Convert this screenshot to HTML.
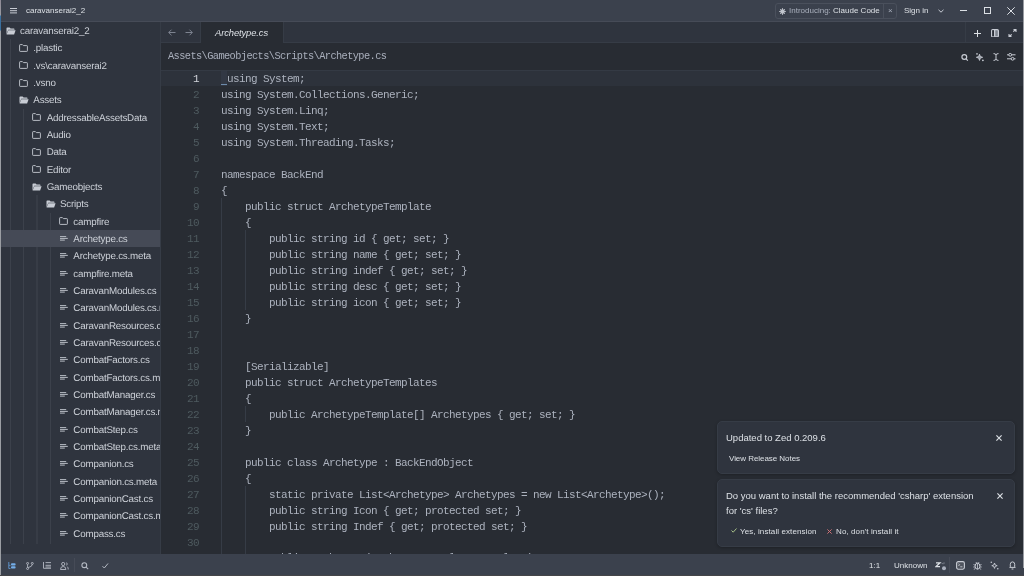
<!DOCTYPE html>
<html><head><meta charset="utf-8">
<style>
*{margin:0;padding:0;box-sizing:border-box}
html,body{width:1024px;height:576px;overflow:hidden;background:#282c33}
body{position:relative;font-family:"Liberation Sans",sans-serif;color:#dce0e5}
.a{position:absolute}
#title{left:0;top:0;width:1024px;height:22px;background:#3b414d;border-bottom:1px solid #464b57}
#panel{left:0;top:22px;width:161px;height:532px;background:#2f343e;border-right:1px solid #363c46;overflow:hidden}
.row{position:absolute;left:0;width:160px;height:17.333px;font-size:9.8px;line-height:17.333px;white-space:nowrap;color:#cdd1d8;letter-spacing:-0.2px;text-rendering:geometricPrecision}
.row.sel{background:#454a56}
.row svg{position:absolute;top:4px}
.row span{position:absolute;top:1px}
.ig{position:absolute;width:1px;background:#3c414b}
#tabbar{left:161px;top:22px;width:863px;height:21px;background:#2f343e;border-bottom:1px solid #363c46}
#editor{left:161px;top:43px;width:863px;height:511px;background:#282c33;overflow:hidden}
.ln{position:absolute;left:0;width:38px;text-align:right;font-family:"Liberation Mono",monospace;font-size:11px;letter-spacing:-0.6px;padding-top:1px;color:#4e5a5f;height:16px;line-height:16px}
.cl{position:absolute;left:60px;font-family:"Liberation Mono",monospace;font-size:11px;letter-spacing:-0.6px;color:#acb2be;white-space:pre;height:16px;line-height:16px;padding-top:1px}
.eig{position:absolute;width:1px;background:#363c46}
#status{left:0;top:554px;width:1024px;height:22px;background:#3b414d}
.card{position:absolute;left:717px;width:298px;background:#2f343e;border:1px solid #363c46;border-radius:5px;box-shadow:0 1px 3px rgba(0,0,0,0.25)}
svg{display:block}
</style></head><body>
<div id="root" style="position:absolute;left:0;top:0;width:1024px;height:576px;overflow:hidden;background:#282c33;will-change:transform">

<!-- title bar -->
<div id="title" class="a">
  <svg class="a" style="left:10px;top:8px" width="8" height="6" viewBox="0 0 8 6"><path d="M0 0.5H7M0 2.7H7M0 4.9H7" stroke="#c8ccd4" stroke-width="1"/></svg>
  <div class="a" style="left:26px;top:0;height:21px;line-height:21px;font-size:8px;color:#dce0e5">caravanserai2_2</div>
  <div class="a" style="left:775px;top:3px;width:122px;height:16px;border:1px solid #4a505c;border-radius:3px"></div>
  <div class="a" style="left:883px;top:3px;width:1px;height:16px;background:#4a505c"></div>
  <svg class="a" style="left:779px;top:8px" width="7" height="7" viewBox="0 0 7 7"><circle cx="3.5" cy="3.5" r="2.3" fill="#c0c4cc"/><path d="M3.5 0V7M0 3.5H7M1 1L6 6M6 1L1 6" stroke="#c0c4cc" stroke-width="0.8"/></svg>
  <div class="a" style="left:789px;top:3px;height:16px;line-height:16px;font-size:8px;color:#a9afbc">Introducing: <span style="color:#dce0e5">Claude Code</span></div>
  <div class="a" style="left:888px;top:3px;height:16px;line-height:16px;font-size:8px;color:#a9afbc">×</div>
  <div class="a" style="left:904px;top:0;height:21px;line-height:21px;font-size:8px;color:#dce0e5">Sign in</div>
  <svg class="a" style="left:938px;top:9px" width="6" height="4" viewBox="0 0 6 4"><path d="M0.5 0.8L3 3.2L5.5 0.8" stroke="#c8ccd4" fill="none" stroke-width="1"/></svg>
  <div class="a" style="left:960px;top:10px;width:7px;height:1px;background:#dce0e5"></div>
  <div class="a" style="left:984px;top:7px;width:7px;height:7px;border:1px solid #dce0e5"></div>
  <svg class="a" style="left:1007px;top:7px" width="8" height="8" viewBox="0 0 8 8"><path d="M0.3 0.3L7.7 7.7M7.7 0.3L0.3 7.7" stroke="#dce0e5" stroke-width="1"/></svg>
</div>

<!-- project panel -->
<div id="panel" class="a">
<div class="ig" style="left:10px;width:1px;background:#3c414b;top:17.33px;height:504.66px"></div>
<div class="ig" style="left:23px;width:1px;background:#3c414b;top:86.66px;height:435.33px"></div>
<div class="ig" style="left:36px;width:2px;background:#373c46;top:173.33px;height:348.66px"></div>
<div class="ig" style="left:50px;width:1px;background:#3c414b;top:190.66px;height:331.33px"></div>
<div class="row" style="top:0.000px"><svg class="a" style="left:5.5px;top:4.7px" width="10" height="8" viewBox="0 0 10 8"><path d="M0.5 1.2Q0.5 0.5 1.2 0.5H3.6L4.6 1.5H7.8Q8.5 1.5 8.5 2.2V2.8H2.2L0.5 7.5Z" fill="#c8ccd4"/><path d="M2.3 3.3H9.6L8.1 7.5H0.6Z" fill="#c8ccd4"/></svg><span style="left:20.00px">caravanserai2_2</span></div>
<div class="row" style="top:17.333px"><svg class="a" style="left:18.83px;top:4.7px" width="9" height="8" viewBox="0 0 9 8"><path d="M0.6 1.2Q0.6 0.6 1.2 0.6H3.4L4.4 1.6H7.8Q8.4 1.6 8.4 2.2V6.8Q8.4 7.4 7.8 7.4H1.2Q0.6 7.4 0.6 6.8Z" fill="none" stroke="#b8bcc4" stroke-width="1"/></svg><span style="left:33.33px">.plastic</span></div>
<div class="row" style="top:34.666px"><svg class="a" style="left:18.83px;top:4.7px" width="9" height="8" viewBox="0 0 9 8"><path d="M0.6 1.2Q0.6 0.6 1.2 0.6H3.4L4.4 1.6H7.8Q8.4 1.6 8.4 2.2V6.8Q8.4 7.4 7.8 7.4H1.2Q0.6 7.4 0.6 6.8Z" fill="none" stroke="#b8bcc4" stroke-width="1"/></svg><span style="left:33.33px">.vs\caravanserai2</span></div>
<div class="row" style="top:51.999px"><svg class="a" style="left:18.83px;top:4.7px" width="9" height="8" viewBox="0 0 9 8"><path d="M0.6 1.2Q0.6 0.6 1.2 0.6H3.4L4.4 1.6H7.8Q8.4 1.6 8.4 2.2V6.8Q8.4 7.4 7.8 7.4H1.2Q0.6 7.4 0.6 6.8Z" fill="none" stroke="#b8bcc4" stroke-width="1"/></svg><span style="left:33.33px">.vsno</span></div>
<div class="row" style="top:69.332px"><svg class="a" style="left:18.83px;top:4.7px" width="10" height="8" viewBox="0 0 10 8"><path d="M0.5 1.2Q0.5 0.5 1.2 0.5H3.6L4.6 1.5H7.8Q8.5 1.5 8.5 2.2V2.8H2.2L0.5 7.5Z" fill="#c8ccd4"/><path d="M2.3 3.3H9.6L8.1 7.5H0.6Z" fill="#c8ccd4"/></svg><span style="left:33.33px">Assets</span></div>
<div class="row" style="top:86.665px"><svg class="a" style="left:32.17px;top:4.7px" width="9" height="8" viewBox="0 0 9 8"><path d="M0.6 1.2Q0.6 0.6 1.2 0.6H3.4L4.4 1.6H7.8Q8.4 1.6 8.4 2.2V6.8Q8.4 7.4 7.8 7.4H1.2Q0.6 7.4 0.6 6.8Z" fill="none" stroke="#b8bcc4" stroke-width="1"/></svg><span style="left:46.67px">AddressableAssetsData</span></div>
<div class="row" style="top:103.998px"><svg class="a" style="left:32.17px;top:4.7px" width="9" height="8" viewBox="0 0 9 8"><path d="M0.6 1.2Q0.6 0.6 1.2 0.6H3.4L4.4 1.6H7.8Q8.4 1.6 8.4 2.2V6.8Q8.4 7.4 7.8 7.4H1.2Q0.6 7.4 0.6 6.8Z" fill="none" stroke="#b8bcc4" stroke-width="1"/></svg><span style="left:46.67px">Audio</span></div>
<div class="row" style="top:121.331px"><svg class="a" style="left:32.17px;top:4.7px" width="9" height="8" viewBox="0 0 9 8"><path d="M0.6 1.2Q0.6 0.6 1.2 0.6H3.4L4.4 1.6H7.8Q8.4 1.6 8.4 2.2V6.8Q8.4 7.4 7.8 7.4H1.2Q0.6 7.4 0.6 6.8Z" fill="none" stroke="#b8bcc4" stroke-width="1"/></svg><span style="left:46.67px">Data</span></div>
<div class="row" style="top:138.664px"><svg class="a" style="left:32.17px;top:4.7px" width="9" height="8" viewBox="0 0 9 8"><path d="M0.6 1.2Q0.6 0.6 1.2 0.6H3.4L4.4 1.6H7.8Q8.4 1.6 8.4 2.2V6.8Q8.4 7.4 7.8 7.4H1.2Q0.6 7.4 0.6 6.8Z" fill="none" stroke="#b8bcc4" stroke-width="1"/></svg><span style="left:46.67px">Editor</span></div>
<div class="row" style="top:155.997px"><svg class="a" style="left:32.17px;top:4.7px" width="10" height="8" viewBox="0 0 10 8"><path d="M0.5 1.2Q0.5 0.5 1.2 0.5H3.6L4.6 1.5H7.8Q8.5 1.5 8.5 2.2V2.8H2.2L0.5 7.5Z" fill="#c8ccd4"/><path d="M2.3 3.3H9.6L8.1 7.5H0.6Z" fill="#c8ccd4"/></svg><span style="left:46.67px">Gameobjects</span></div>
<div class="row" style="top:173.330px"><svg class="a" style="left:45.5px;top:4.7px" width="10" height="8" viewBox="0 0 10 8"><path d="M0.5 1.2Q0.5 0.5 1.2 0.5H3.6L4.6 1.5H7.8Q8.5 1.5 8.5 2.2V2.8H2.2L0.5 7.5Z" fill="#c8ccd4"/><path d="M2.3 3.3H9.6L8.1 7.5H0.6Z" fill="#c8ccd4"/></svg><span style="left:60.00px">Scripts</span></div>
<div class="row" style="top:190.663px"><svg class="a" style="left:58.83px;top:4.7px" width="9" height="8" viewBox="0 0 9 8"><path d="M0.6 1.2Q0.6 0.6 1.2 0.6H3.4L4.4 1.6H7.8Q8.4 1.6 8.4 2.2V6.8Q8.4 7.4 7.8 7.4H1.2Q0.6 7.4 0.6 6.8Z" fill="none" stroke="#b8bcc4" stroke-width="1"/></svg><span style="left:73.33px">campfire</span></div>
<div class="row sel" style="top:207.996px"><svg class="a" style="left:60.33px;top:5px" width="9" height="7" viewBox="0 0 9 7"><path d="M0 1.6H6.2M0 3.4H7.8M0 5.1H4.8" stroke="#b8bcc4" stroke-width="1"/></svg><span style="left:73.33px">Archetype.cs</span></div>
<div class="row" style="top:225.329px"><svg class="a" style="left:60.33px;top:5px" width="9" height="7" viewBox="0 0 9 7"><path d="M0 1.6H6.2M0 3.4H7.8M0 5.1H4.8" stroke="#b8bcc4" stroke-width="1"/></svg><span style="left:73.33px">Archetype.cs.meta</span></div>
<div class="row" style="top:242.662px"><svg class="a" style="left:60.33px;top:5px" width="9" height="7" viewBox="0 0 9 7"><path d="M0 1.6H6.2M0 3.4H7.8M0 5.1H4.8" stroke="#b8bcc4" stroke-width="1"/></svg><span style="left:73.33px">campfire.meta</span></div>
<div class="row" style="top:259.995px"><svg class="a" style="left:60.33px;top:5px" width="9" height="7" viewBox="0 0 9 7"><path d="M0 1.6H6.2M0 3.4H7.8M0 5.1H4.8" stroke="#b8bcc4" stroke-width="1"/></svg><span style="left:73.33px">CaravanModules.cs</span></div>
<div class="row" style="top:277.328px"><svg class="a" style="left:60.33px;top:5px" width="9" height="7" viewBox="0 0 9 7"><path d="M0 1.6H6.2M0 3.4H7.8M0 5.1H4.8" stroke="#b8bcc4" stroke-width="1"/></svg><span style="left:73.33px">CaravanModules.cs.meta</span></div>
<div class="row" style="top:294.661px"><svg class="a" style="left:60.33px;top:5px" width="9" height="7" viewBox="0 0 9 7"><path d="M0 1.6H6.2M0 3.4H7.8M0 5.1H4.8" stroke="#b8bcc4" stroke-width="1"/></svg><span style="left:73.33px">CaravanResources.cs</span></div>
<div class="row" style="top:311.994px"><svg class="a" style="left:60.33px;top:5px" width="9" height="7" viewBox="0 0 9 7"><path d="M0 1.6H6.2M0 3.4H7.8M0 5.1H4.8" stroke="#b8bcc4" stroke-width="1"/></svg><span style="left:73.33px">CaravanResources.cs.meta</span></div>
<div class="row" style="top:329.327px"><svg class="a" style="left:60.33px;top:5px" width="9" height="7" viewBox="0 0 9 7"><path d="M0 1.6H6.2M0 3.4H7.8M0 5.1H4.8" stroke="#b8bcc4" stroke-width="1"/></svg><span style="left:73.33px">CombatFactors.cs</span></div>
<div class="row" style="top:346.660px"><svg class="a" style="left:60.33px;top:5px" width="9" height="7" viewBox="0 0 9 7"><path d="M0 1.6H6.2M0 3.4H7.8M0 5.1H4.8" stroke="#b8bcc4" stroke-width="1"/></svg><span style="left:73.33px">CombatFactors.cs.meta</span></div>
<div class="row" style="top:363.993px"><svg class="a" style="left:60.33px;top:5px" width="9" height="7" viewBox="0 0 9 7"><path d="M0 1.6H6.2M0 3.4H7.8M0 5.1H4.8" stroke="#b8bcc4" stroke-width="1"/></svg><span style="left:73.33px">CombatManager.cs</span></div>
<div class="row" style="top:381.326px"><svg class="a" style="left:60.33px;top:5px" width="9" height="7" viewBox="0 0 9 7"><path d="M0 1.6H6.2M0 3.4H7.8M0 5.1H4.8" stroke="#b8bcc4" stroke-width="1"/></svg><span style="left:73.33px">CombatManager.cs.meta</span></div>
<div class="row" style="top:398.659px"><svg class="a" style="left:60.33px;top:5px" width="9" height="7" viewBox="0 0 9 7"><path d="M0 1.6H6.2M0 3.4H7.8M0 5.1H4.8" stroke="#b8bcc4" stroke-width="1"/></svg><span style="left:73.33px">CombatStep.cs</span></div>
<div class="row" style="top:415.992px"><svg class="a" style="left:60.33px;top:5px" width="9" height="7" viewBox="0 0 9 7"><path d="M0 1.6H6.2M0 3.4H7.8M0 5.1H4.8" stroke="#b8bcc4" stroke-width="1"/></svg><span style="left:73.33px">CombatStep.cs.meta</span></div>
<div class="row" style="top:433.325px"><svg class="a" style="left:60.33px;top:5px" width="9" height="7" viewBox="0 0 9 7"><path d="M0 1.6H6.2M0 3.4H7.8M0 5.1H4.8" stroke="#b8bcc4" stroke-width="1"/></svg><span style="left:73.33px">Companion.cs</span></div>
<div class="row" style="top:450.658px"><svg class="a" style="left:60.33px;top:5px" width="9" height="7" viewBox="0 0 9 7"><path d="M0 1.6H6.2M0 3.4H7.8M0 5.1H4.8" stroke="#b8bcc4" stroke-width="1"/></svg><span style="left:73.33px">Companion.cs.meta</span></div>
<div class="row" style="top:467.991px"><svg class="a" style="left:60.33px;top:5px" width="9" height="7" viewBox="0 0 9 7"><path d="M0 1.6H6.2M0 3.4H7.8M0 5.1H4.8" stroke="#b8bcc4" stroke-width="1"/></svg><span style="left:73.33px">CompanionCast.cs</span></div>
<div class="row" style="top:485.324px"><svg class="a" style="left:60.33px;top:5px" width="9" height="7" viewBox="0 0 9 7"><path d="M0 1.6H6.2M0 3.4H7.8M0 5.1H4.8" stroke="#b8bcc4" stroke-width="1"/></svg><span style="left:73.33px">CompanionCast.cs.meta</span></div>
<div class="row" style="top:502.657px"><svg class="a" style="left:60.33px;top:5px" width="9" height="7" viewBox="0 0 9 7"><path d="M0 1.6H6.2M0 3.4H7.8M0 5.1H4.8" stroke="#b8bcc4" stroke-width="1"/></svg><span style="left:73.33px">Compass.cs</span></div>
</div>

<!-- tab bar -->
<div id="tabbar" class="a">
  <div class="a" style="left:0;top:0;width:40px;height:20px;border-right:1px solid #363c46"></div>
  <svg class="a" style="left:7px;top:7px" width="8" height="7" viewBox="0 0 8 7"><path d="M7.5 3.5H0.8M3.5 0.7L0.7 3.5L3.5 6.3" stroke="#7d8390" fill="none" stroke-width="1"/></svg>
  <svg class="a" style="left:24px;top:7px" width="8" height="7" viewBox="0 0 8 7"><path d="M0.5 3.5H7.2M4.5 0.7L7.3 3.5L4.5 6.3" stroke="#7d8390" fill="none" stroke-width="1"/></svg>
  <div class="a" style="left:40px;top:0;width:83px;height:21px;background:#282c33;border-right:1px solid #363c46"></div>
  <div class="a" style="left:54px;top:0;height:21px;line-height:21px;font-size:9.4px;font-style:italic;letter-spacing:-0.1px;color:#dce0e5">Archetype.cs</div>
  <div class="a" style="left:804px;top:0;width:1px;height:20px;background:#363c46"></div>
  <svg class="a" style="left:813px;top:8px" width="7" height="7" viewBox="0 0 7 7"><path d="M3.5 0V7M0 3.5H7" stroke="#dce0e5" stroke-width="1"/></svg>
  <svg class="a" style="left:830px;top:6.5px" width="8" height="8.5" viewBox="0 0 8 8.5"><rect x="0.6" y="0.6" width="6.8" height="7.3" rx="1.2" fill="#7d838d" stroke="#c8ccd4" stroke-width="1.2"/><rect x="1.2" y="1.2" width="1.8" height="6.1" fill="#2a2e36"/><rect x="3" y="1" width="1.3" height="6.5" fill="#c8ccd4"/></svg>
  <svg class="a" style="left:846.5px;top:7px" width="9" height="8" viewBox="0 0 9 8"><path d="M5.3 2.7L7.8 0.5M5.5 0.6H8V3M3.7 5.3L1.2 7.5M1 5V7.4H3.5" stroke="#c8ccd4" fill="none" stroke-width="1.1"/></svg>
</div>

<!-- editor -->
<div id="editor" class="a">
  <div class="a" style="left:7px;top:0;height:27px;line-height:27px;font-family:'Liberation Mono',monospace;font-size:10.3px;letter-spacing:-0.58px;color:#a9afbc;white-space:pre">Assets\Gameobjects\Scripts\Archetype.cs</div>
  <svg class="a" style="left:800px;top:10.5px" width="8" height="7" viewBox="0 0 8 7"><circle cx="3.3" cy="3" r="2.4" fill="none" stroke="#c8ccd4" stroke-width="1.2"/><path d="M5.1 4.9L6.8 6.6" stroke="#c8ccd4" stroke-width="1.2"/></svg>
  <svg class="a" style="left:815px;top:9.5px" width="9" height="9" viewBox="0 0 9 9"><path d="M3.5 1.2L4.3 3.5L6.6 4.3L4.3 5.1L3.5 7.4L2.7 5.1L0.4 4.3L2.7 3.5Z" fill="#9aa0ab" stroke="#c8ccd4" stroke-width="0.9"/><circle cx="1" cy="0.9" r="0.8" fill="#c8ccd4"/><circle cx="6.9" cy="7.3" r="0.9" fill="#c8ccd4"/></svg>
  <svg class="a" style="left:832px;top:10px" width="6" height="8" viewBox="0 0 6 8"><path d="M0.5 0.6Q3 0.6 3 2V6Q3 7.4 0.5 7.4M5.5 0.6Q3 0.6 3 2M3 6Q3 7.4 5.5 7.4" stroke="#c8ccd4" fill="none" stroke-width="1"/></svg>
  <svg class="a" style="left:846px;top:10px" width="9" height="8" viewBox="0 0 9 8"><path d="M0 1.8H8.5M0 5.8H8.5" stroke="#c8ccd4" stroke-width="1"/><circle cx="3.2" cy="1.8" r="1.4" fill="#282c33" stroke="#c8ccd4"/><circle cx="5.6" cy="5.8" r="1.4" fill="#282c33" stroke="#c8ccd4"/></svg>
  <!-- active line -->
  <div class="a" style="left:0;top:27px;width:863px;height:1px;background:#343a44"></div><div class="a" style="left:0;top:28px;width:863px;height:15px;background:#2d323b"></div>
  <div class="ln" style="top:27px;color:#d0d4da">1</div>
<div class="a" style="left:60px;top:28px;width:6px;height:15px;background:#323844"></div><div class="a" style="left:60px;top:41px;width:6px;height:1px;background:#6d8bab"></div>
<div class="cl" style="top:27px;left:66px">using System;</div>
<div class="ln" style="top:43px;color:#4e5a5f">2</div>
<div class="cl" style="top:43px">using System.Collections.Generic;</div>
<div class="ln" style="top:59px;color:#4e5a5f">3</div>
<div class="cl" style="top:59px">using System.Linq;</div>
<div class="ln" style="top:75px;color:#4e5a5f">4</div>
<div class="cl" style="top:75px">using System.Text;</div>
<div class="ln" style="top:91px;color:#4e5a5f">5</div>
<div class="cl" style="top:91px">using System.Threading.Tasks;</div>
<div class="ln" style="top:107px;color:#4e5a5f">6</div>
<div class="cl" style="top:107px"></div>
<div class="ln" style="top:123px;color:#4e5a5f">7</div>
<div class="cl" style="top:123px">namespace BackEnd</div>
<div class="ln" style="top:139px;color:#4e5a5f">8</div>
<div class="cl" style="top:139px">{</div>
<div class="ln" style="top:155px;color:#4e5a5f">9</div>
<div class="cl" style="top:155px">    public struct ArchetypeTemplate</div>
<div class="ln" style="top:171px;color:#4e5a5f">10</div>
<div class="cl" style="top:171px">    {</div>
<div class="ln" style="top:187px;color:#4e5a5f">11</div>
<div class="cl" style="top:187px">        public string id { get; set; }</div>
<div class="ln" style="top:203px;color:#4e5a5f">12</div>
<div class="cl" style="top:203px">        public string name { get; set; }</div>
<div class="ln" style="top:219px;color:#4e5a5f">13</div>
<div class="cl" style="top:219px">        public string indef { get; set; }</div>
<div class="ln" style="top:235px;color:#4e5a5f">14</div>
<div class="cl" style="top:235px">        public string desc { get; set; }</div>
<div class="ln" style="top:251px;color:#4e5a5f">15</div>
<div class="cl" style="top:251px">        public string icon { get; set; }</div>
<div class="ln" style="top:267px;color:#4e5a5f">16</div>
<div class="cl" style="top:267px">    }</div>
<div class="ln" style="top:283px;color:#4e5a5f">17</div>
<div class="cl" style="top:283px"></div>
<div class="ln" style="top:299px;color:#4e5a5f">18</div>
<div class="cl" style="top:299px"></div>
<div class="ln" style="top:315px;color:#4e5a5f">19</div>
<div class="cl" style="top:315px">    [Serializable]</div>
<div class="ln" style="top:331px;color:#4e5a5f">20</div>
<div class="cl" style="top:331px">    public struct ArchetypeTemplates</div>
<div class="ln" style="top:347px;color:#4e5a5f">21</div>
<div class="cl" style="top:347px">    {</div>
<div class="ln" style="top:363px;color:#4e5a5f">22</div>
<div class="cl" style="top:363px">        public ArchetypeTemplate[] Archetypes { get; set; }</div>
<div class="ln" style="top:379px;color:#4e5a5f">23</div>
<div class="cl" style="top:379px">    }</div>
<div class="ln" style="top:395px;color:#4e5a5f">24</div>
<div class="cl" style="top:395px"></div>
<div class="ln" style="top:411px;color:#4e5a5f">25</div>
<div class="cl" style="top:411px">    public class Archetype : BackEndObject</div>
<div class="ln" style="top:427px;color:#4e5a5f">26</div>
<div class="cl" style="top:427px">    {</div>
<div class="ln" style="top:443px;color:#4e5a5f">27</div>
<div class="cl" style="top:443px">        static private List&lt;Archetype&gt; Archetypes = new List&lt;Archetype&gt;();</div>
<div class="ln" style="top:459px;color:#4e5a5f">28</div>
<div class="cl" style="top:459px">        public string Icon { get; protected set; }</div>
<div class="ln" style="top:475px;color:#4e5a5f">29</div>
<div class="cl" style="top:475px">        public string Indef { get; protected set; }</div>
<div class="ln" style="top:491px;color:#4e5a5f">30</div>
<div class="cl" style="top:491px"></div>
<div class="ln" style="top:505.5px;color:#4e5a5f">31</div>
<div class="cl" style="top:505.5px">        public Archetype(ArchetypeTemplate template)</div>
<div class="eig" style="left:60px;top:155px;height:368px"></div>
<div class="eig" style="left:84px;top:187px;height:80px"></div>
<div class="eig" style="left:84px;top:363px;height:16px"></div>
<div class="eig" style="left:84px;top:443px;height:80px"></div>
</div>

<!-- notifications -->
<div class="card" style="top:421px;height:53px">
  <div class="a" style="left:8px;top:8px;font-size:9.5px;line-height:15px;color:#dce0e5">Updated to Zed 0.209.6</div>
  <svg class="a" style="left:278px;top:12.7px" width="6" height="6" viewBox="0 0 6 6"><path d="M0.4 0.4L5.6 5.6M5.6 0.4L0.4 5.6" stroke="#dce0e5" stroke-width="1.15"/></svg>
  <div class="a" style="left:11px;top:31px;font-size:8px;line-height:12px;letter-spacing:-0.05px;color:#dce0e5">View Release Notes</div>
</div>
<div class="card" style="top:479px;height:68px">
  <div class="a" style="left:8px;top:8px;width:255px;font-size:9.5px;line-height:15px;color:#dce0e5">Do you want to install the recommended 'csharp' extension for 'cs' files?</div>
  <svg class="a" style="left:279px;top:12.5px" width="6" height="6" viewBox="0 0 6 6"><path d="M0.4 0.4L5.6 5.6M5.6 0.4L0.4 5.6" stroke="#dce0e5" stroke-width="1.15"/></svg>
  <svg class="a" style="left:13px;top:48px" width="6" height="5" viewBox="0 0 6 5"><path d="M0.5 2.5L2.2 4.2L5.5 0.5" stroke="#a7c088" fill="none" stroke-width="1"/></svg>
  <div class="a" style="left:22px;top:45.5px;font-size:8px;letter-spacing:0.1px;line-height:12px;color:#dce0e5">Yes, install extension</div>
  <svg class="a" style="left:109px;top:48.5px" width="5" height="5" viewBox="0 0 5 5"><path d="M0.4 0.4L4.6 4.6M4.6 0.4L0.4 4.6" stroke="#d07277" stroke-width="1"/></svg>
  <div class="a" style="left:118px;top:45.5px;font-size:8px;letter-spacing:0.1px;line-height:12px;color:#dce0e5">No, don't install it</div>
</div>

<!-- status bar -->
<div id="status" class="a">

  <svg class="a" style="left:8px;top:7.5px" width="8" height="7" viewBox="0 0 8 7"><path d="M0.8 0V6.5H2.5M0.8 3.3H2.5" stroke="#5d8fc4" fill="none" stroke-width="1"/><rect x="3" y="1.2" width="4.6" height="2.2" rx="0.9" fill="#74ade8"/><rect x="3" y="4.3" width="4.6" height="2.2" rx="0.9" fill="#74ade8"/></svg>
  <svg class="a" style="left:25.5px;top:7.5px" width="8" height="8" viewBox="0 0 8 8"><circle cx="1.6" cy="1.4" r="1" fill="none" stroke="#b5bac4" stroke-width="0.9"/><circle cx="6.3" cy="1.4" r="1" fill="none" stroke="#b5bac4" stroke-width="0.9"/><circle cx="1.6" cy="6.5" r="1" fill="none" stroke="#b5bac4" stroke-width="0.9"/><path d="M1.6 2.4V5.5M6.3 2.4Q6.3 4.6 2.2 5.6" stroke="#b5bac4" fill="none" stroke-width="0.9"/></svg>
  <svg class="a" style="left:42.5px;top:8px" width="8" height="7" viewBox="0 0 8 7"><path d="M0.5 0V6.3H8M2.5 0.6H8M2.5 3.3H8" stroke="#b5bac4" fill="none" stroke-width="0.9"/><path d="M2.5 5H8" stroke="#b5bac4" stroke-width="0.9"/></svg>
  <svg class="a" style="left:60px;top:7.5px" width="9" height="8" viewBox="0 0 9 8"><circle cx="3.2" cy="2" r="1.6" fill="none" stroke="#b5bac4" stroke-width="0.9"/><path d="M0.5 7.5Q0.5 4.5 3.2 4.5Q5.9 4.5 5.9 7.5Z" fill="none" stroke="#b5bac4" stroke-width="0.9"/><path d="M6.6 0.6Q7.8 2 6.6 3.4M7.4 4.7Q8.4 5.8 8.2 7.5" stroke="#b5bac4" fill="none" stroke-width="0.9"/></svg>
  <div class="a" style="left:74px;top:4px;width:1px;height:14px;background:#464b57"></div>
  <svg class="a" style="left:81px;top:8px" width="8" height="8" viewBox="0 0 8 8"><circle cx="3.3" cy="3.2" r="2.4" fill="none" stroke="#b5bac4" stroke-width="1.1"/><path d="M5.1 5.1L7.2 7.2" stroke="#b5bac4" stroke-width="1.1"/></svg>
  <svg class="a" style="left:101.5px;top:9px" width="7" height="6" viewBox="0 0 7 6"><path d="M0.5 3.2L2.3 5L6 0.5" stroke="#b5bac4" fill="none" stroke-width="1"/></svg>
  <div class="a" style="left:869px;top:1px;height:22px;line-height:22px;font-size:8px;color:#dce0e5">1:1</div>
  <div class="a" style="left:894px;top:1px;height:22px;line-height:22px;font-size:8px;color:#dce0e5">Unknown</div>
  <svg class="a" style="left:935px;top:8px" width="12" height="9" viewBox="0 0 12 9"><path d="M1 0.8H5L1 4.6H5" stroke="#dce0e5" fill="none" stroke-width="1.3"/><circle cx="9" cy="6.2" r="2" fill="#a9afbc"/><path d="M7 1.2L7.8 2.2M9 0.5L8.9 1.8" stroke="#a9afbc" stroke-width="0.8"/></svg>
  <div class="a" style="left:949px;top:3px;width:1px;height:16px;background:#464b57"></div>
  <svg class="a" style="left:956px;top:7px" width="9" height="9" viewBox="0 0 9 9"><rect x="0.6" y="0.6" width="7.8" height="7.6" rx="1.6" fill="#50555f" stroke="#c8ccd4" stroke-width="1.1"/><path d="M2.4 2.6L3.6 3.8L2.4 5M4.3 5.8H6.4" stroke="#c8ccd4" fill="none" stroke-width="0.9"/></svg>
  <svg class="a" style="left:973px;top:7px" width="9" height="9" viewBox="0 0 9 9"><ellipse cx="4.5" cy="5.2" rx="2.4" ry="3" fill="none" stroke="#c8ccd4"/><path d="M4.5 2.5V8.2M0.5 3.5L2.2 4.2M8.5 3.5L6.8 4.2M0.3 6H2.1M8.7 6H6.9M0.8 8.5L2.3 7.5M8.2 8.5L6.7 7.5M3 1L3.6 2.3M6 1L5.4 2.3" stroke="#c8ccd4" stroke-width="0.8"/></svg>
  <svg class="a" style="left:990px;top:7px" width="9" height="9" viewBox="0 0 9 9"><path d="M4.5 2L5.2 4L7.2 4.7L5.2 5.4L4.5 7.4L3.8 5.4L1.8 4.7L3.8 4Z" fill="none" stroke="#c8ccd4" stroke-width="0.9"/><circle cx="1.3" cy="1.3" r="0.8" fill="#c8ccd4"/><circle cx="7.8" cy="7.8" r="0.8" fill="#c8ccd4"/></svg>
  <svg class="a" style="left:1009px;top:7px" width="7" height="9" viewBox="0 0 7 9"><path d="M1.3 5.8V3.3Q1.3 0.9 3.5 0.9Q5.7 0.9 5.7 3.3V5.8L6.3 6.4H0.7Z" fill="none" stroke="#c8ccd4" stroke-width="1"/><path d="M2.6 8H4.4" stroke="#c8ccd4" stroke-width="1"/></svg>

</div>
<div class="a" style="left:0;top:0;width:1px;height:576px;background:linear-gradient(#8e8a96,#9a9aa0 15px,#3a6f9e 16px,#3a6f9e 30px,#9b9ea3 31px,#9b9ea3)"></div>
<div class="a" style="left:1023px;top:0;width:1px;height:568px;background:#999ca2"></div>
<div class="a" style="left:0;top:575px;width:1024px;height:1px;background:#454548"></div>
</div>
</body></html>
